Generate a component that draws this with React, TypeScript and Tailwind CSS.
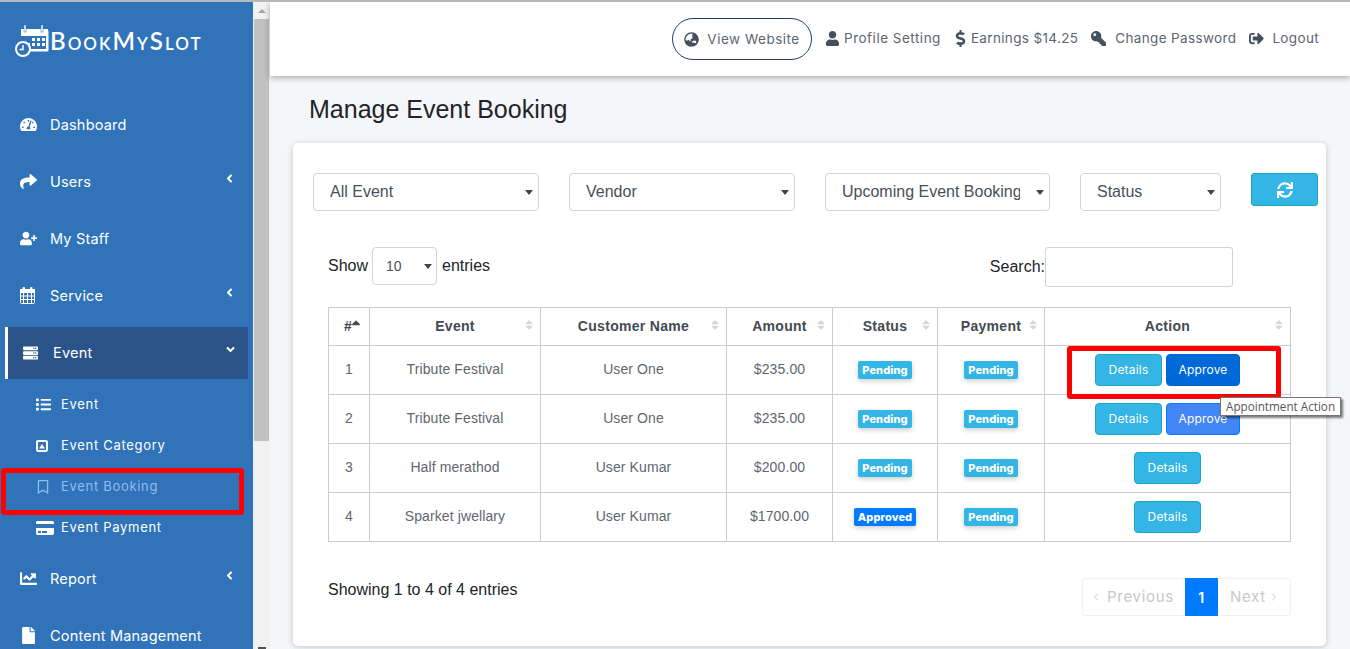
import type { ReactNode } from 'react';
import { ChevronLeft, ChevronRight } from 'lucide-react';
import {
  FaAngleDown,
  FaAngleLeft,
  FaChartLine,
  FaCreditCard,
  FaDollarSign,
  FaFile,
  FaGlobeAsia,
  FaKey,
  FaList,
  FaRegBookmark,
  FaServer,
  FaShare,
  FaSignOutAlt,
  FaSort,
  FaSortUp,
  FaSync,
  FaTachometerAlt,
  FaUser,
  FaUserPlus,
} from 'react-icons/fa';

const ui = "font-['Inter','Liberation_Sans',sans-serif]";
const arial = "font-['Liberation_Sans',Arial,sans-serif]";

function Logo() {
  return (
    <div className="flex items-center h-[94px] pl-[14px] pb-[17px]">
      <svg width="36" height="34" viewBox="0 0 36 34" fill="none" className="shrink-0">
        <path d="M7 6h26a1.500 1.500 0 0 1 1.500 1.500V26a1.500 1.500 0 0 1-1.500 1.500H15V25h17V12H7z" fill="#fff" />
        <rect x="7" y="5" width="27" height="6" fill="#fff" />
        <rect x="10" y="1" width="2" height="7" fill="#fff" stroke="#3073b9" strokeWidth="0.5" />
        <rect x="27" y="1" width="2" height="7" fill="#fff" stroke="#3073b9" strokeWidth="0.5" />
        <g fill="#fff">
          <rect x="18" y="14" width="3" height="3" />
          <rect x="23" y="14" width="3" height="3" />
          <rect x="28" y="14" width="3" height="3" />
          <rect x="13" y="19" width="3" height="3" />
          <rect x="18" y="19" width="3" height="3" />
          <rect x="23" y="19" width="3" height="3" />
          <rect x="28" y="19" width="3" height="3" />
        </g>
        <circle cx="9" cy="25" r="7" fill="#3073b9" stroke="#fff" strokeWidth="2" />
        <path d="M9 21v4.500H5.500" stroke="#fff" strokeWidth="1.500" />
      </svg>
      <span className="font-['Lato',sans-serif] font-semibold text-[24px] leading-none text-white [font-variant:small-caps] tracking-[2px] whitespace-nowrap">
        BookMySlot
      </span>
    </div>
  );
}

function CalendarIcon() {
  return (
    <svg width="15" height="17" viewBox="0 0 15 17" fill="none" className="block">
      <rect x="0.500" y="2.500" width="14" height="14" rx="1" stroke="#fff" />
      <rect x="0" y="2" width="15" height="4" fill="#fff" />
      <rect x="2.500" y="0" width="2.500" height="4.500" rx="1" fill="#fff" />
      <rect x="10" y="0" width="2.500" height="4.500" rx="1" fill="#fff" />
      <path d="M3.500 6v10M7.500 6v10M11.500 6v10M1 9h13M1 12.500h13" stroke="#fff" />
    </svg>
  );
}

function PictureIcon() {
  return (
    <svg width="12" height="12" viewBox="0 0 12 12" fill="none" className="block">
      <rect x="1" y="1" width="10" height="10" rx="1" stroke="#fff" strokeWidth="2" />
      <path d="M3 8.500 6 4l3 4.500z" fill="#fff" />
    </svg>
  );
}

function NavItem({ icon, label, arrow }: { icon: ReactNode; label: string; arrow?: boolean }) {
  return (
    <div className={`flex items-center h-[57px] pl-[20px] pr-[17px] text-white text-[14.500px] tracking-[0.2px] ${ui}`}>
      <span className="w-[30px] text-[17px]">{icon}</span>
      <span className="flex-1 whitespace-nowrap">{label}</span>
      {arrow && <FaAngleLeft className="text-[13px] mb-[6px]" />}
    </div>
  );
}

function SubItem({ icon, label, muted }: { icon: ReactNode; label: string; muted?: boolean }) {
  return (
    <div className={`flex items-center h-[41px] pl-[36px] text-[13px] tracking-[0.7px] ${ui} ${muted ? 'text-[#8fbdf0]' : 'text-white'}`}>
      <span className="w-[25px] text-[15px]">{icon}</span>
      <span>{label}</span>
    </div>
  );
}

function Sidebar() {
  return (
    <aside className="relative w-[253px] shrink-0 bg-[#3073b9] overflow-hidden">
      <Logo />
      <NavItem icon={<FaTachometerAlt />} label="Dashboard" />
      <NavItem icon={<FaShare />} label="Users" arrow />
      <NavItem icon={<FaUserPlus />} label="My Staff" />
      <NavItem icon={<CalendarIcon />} label="Service" arrow />
      <div className="h-[57px] py-[2.500px] pl-[5px] pr-[5px]">
        <div className={`flex items-center h-[52px] border-l-[3px] border-white bg-[#2a5389] pl-[15px] pr-[11px] text-white text-[14.500px] tracking-[0.2px] ${ui}`}>
          <FaServer className="text-[16px] w-[15px] mr-[15px]" />
          <span className="flex-1">Event</span>
          <FaAngleDown className="text-[13px] mb-[6px]" />
        </div>
      </div>
      <div className="h-[3px]" />
      <SubItem icon={<FaList />} label="Event" />
      <SubItem icon={<PictureIcon />} label="Event Category" />
      <SubItem icon={<FaRegBookmark className="text-[14px]" />} label="Event Booking" muted />
      <SubItem icon={<FaCreditCard className="text-[18px]" />} label="Event Payment" />
      <div className="h-[2px]" />
      <NavItem icon={<FaChartLine />} label="Report" arrow />
      <NavItem icon={<FaFile />} label="Content Management" />
    </aside>
  );
}

function Scrollbar() {
  return (
    <div className="w-[17px] shrink-0 flex flex-col items-center bg-[#f1f1f1]">
      <div className="h-[17px] flex items-center">
        <div className="w-0 h-0 border-x-[4px] border-x-transparent border-b-[4px] border-b-[#a3a3a3]" />
      </div>
      <div className="w-[15px] h-[422px] bg-[#c1c1c1]" />
      <div className="flex-1" />
      <div className="w-[8px] h-[2px] bg-[#505050]" />
    </div>
  );
}

function TopLink({ icon, label, iconWidth, className = '' }: { icon: ReactNode; label: string; iconWidth: string; className?: string }) {
  return (
    <span className={`flex items-center whitespace-nowrap mb-[2px] ${className}`}>
      <span className={`${iconWidth} text-[15px] text-[#454f5e]`}>{icon}</span>
      {label}
    </span>
  );
}

function Header() {
  return (
    <header className={`relative flex items-center justify-end h-[74px] shrink-0 bg-white pr-[31px] gap-[13px] text-[13.500px] tracking-[0.35px] text-[#5d6570] shadow-[0_2px_6px_rgba(0,0,0,0.3)] ${ui}`}>
      <span className="flex items-center justify-center gap-[8px] w-[140px] h-[42px] rounded-[21px] border border-[#23406e] whitespace-nowrap tracking-[0.5px]">
        <FaGlobeAsia className="text-[15px] text-[#454f5e]" />
        View Website
      </span>
      <TopLink iconWidth="w-[19px]" className="tracking-[0.5px]" icon={<FaUser />} label="Profile Setting" />
      <TopLink iconWidth="w-[17px]" icon={<FaDollarSign className="text-[17px] -ml-[2px]" />} label="Earnings $14.25" />
      <TopLink iconWidth="w-[24px]" icon={<FaKey className="-scale-x-100" />} label="Change Password" />
      <TopLink iconWidth="w-[23px]" icon={<FaSignOutAlt />} label="Logout" />
    </header>
  );
}

// flat select with the small native-looking triangle on the right
function Filter({ width, label }: { width: string; label: string }) {
  return (
    <div className={`relative ${width}`}>
      <select className={`block w-full h-[38px] pl-[16px] pr-[29px] appearance-none text-[16px] text-[#495057] bg-white border border-[#ced4da] rounded-[4px] ${arial}`}>
        <option>{label}</option>
      </select>
      <span className="absolute right-[6px] top-[17px] w-0 h-0 border-x-[4px] border-x-transparent border-t-[5px] border-t-[#444444]" />
    </div>
  );
}

function Badge({ label, approved }: { label: string; approved?: boolean }) {
  return (
    <span className={`inline-block h-[18px] px-[4px] rounded-[2px] text-[11px] leading-[18px] font-extrabold text-white shadow-[0_2px_5px_rgba(0,0,0,0.2)] ${ui} ${approved ? 'bg-[#007bff]' : 'bg-[#33b5e5]'}`}>
      {label}
    </span>
  );
}

function ActionBtn({ label, className }: { label: string; className: string }) {
  return (
    <span className={`inline-flex items-center justify-center h-[32px] rounded-[4px] border text-[12px] tracking-[0.2px] text-white ${ui} ${className}`}>
      {label}
    </span>
  );
}

const columns = ['#', 'Event', 'Customer Name', 'Amount', 'Status', 'Payment', 'Action'];
const widths = ['w-[41px]', 'w-[171px]', 'w-[186px]', 'w-[106px]', 'w-[105px]', 'w-[107px]', 'w-[246px]'];

const rows = [
  { id: 1, event: 'Tribute Festival', name: 'User One', amount: '$235.00', approved: false, approve: 'bg-[#0069d9] border-[#0062cc]' },
  { id: 2, event: 'Tribute Festival', name: 'User One', amount: '$235.00', approved: false, approve: 'bg-[#4285f4] border-[#007bff]' },
  { id: 3, event: 'Half merathod', name: 'User Kumar', amount: '$200.00', approved: false },
  { id: 4, event: 'Sparket jwellary', name: 'User Kumar', amount: '$1700.00', approved: true },
];

function BookingTable() {
  return (
    <table className={`w-[963px] table-fixed border-collapse text-[14px] tracking-[0.1px] text-[#5f6670] ${arial}`}>
      <colgroup>
        {widths.map(w => (
          <col key={w} className={w} />
        ))}
      </colgroup>
      <thead>
        <tr className="h-[38px]">
          {columns.map((c, i) => (
            <th key={c} className="relative border border-[#cccccc] text-center font-bold text-[#444a52] tracking-[0.3px]">
              <span className={i === 0 ? 'relative -left-[1px]' : ''}>{c}</span>
              {i === 0 ? (
                <FaSortUp className="absolute right-[6px] top-[11px] text-[14px] text-[#444a52]" />
              ) : (
                <FaSort className="absolute right-[5px] top-[11px] text-[12px] text-[#d6d6d6]" />
              )}
            </th>
          ))}
        </tr>
      </thead>
      <tbody>
        {rows.map(row => (
          <tr key={row.id} className="h-[49px] text-center">
            <td className="border border-[#cccccc] pb-[2px]">{row.id}</td>
            <td className="border border-[#cccccc] pb-[2px]">{row.event}</td>
            <td className="border border-[#cccccc] pb-[2px]">{row.name}</td>
            <td className="border border-[#cccccc] pb-[2px]">{row.amount}</td>
            <td className="border border-[#cccccc] pb-[2px]"><Badge label={row.approved ? 'Approved' : 'Pending'} approved={row.approved} /></td>
            <td className="border border-[#cccccc] pb-[2px]"><Badge label="Pending" /></td>
            <td className="border border-[#cccccc]">
              <div className="flex justify-center gap-[4px]">
                <ActionBtn label="Details" className="w-[67px] bg-[#33b5e5] border-[#1ea7c5]" />
                {row.approve && <ActionBtn label="Approve" className={`w-[74px] ${row.approve}`} />}
              </div>
            </td>
          </tr>
        ))}
      </tbody>
    </table>
  );
}

function Pagination() {
  return (
    <div className={`flex h-[38px] rounded-[3px] border border-[#f1f1f1] text-[15px] tracking-[0.7px] text-[#c8c8c8] ${ui}`}>
      <span className="flex items-center gap-[5px] w-[102px] pl-[7px]">
        <ChevronLeft size={12} strokeWidth={2} />
        Previous
      </span>
      <span className="flex items-center justify-center w-[33px] -my-px bg-[#007bff] text-white font-semibold text-[14px]">1</span>
      <span className="flex items-center gap-[2px] w-[72px] pl-[12px]">
        Next
        <ChevronRight size={12} strokeWidth={2} />
      </span>
    </div>
  );
}

function Card() {
  return (
    <section className={`mt-[17px] ml-[23px] mr-[24px] h-[503px] rounded-[5px] bg-white pt-[30px] pl-[20px] pr-[8px] shadow-[0_1px_6px_rgba(0,0,0,0.2)] ${arial}`}>
      <div className="flex items-start gap-[30px]">
        <Filter width="w-[226px]" label="All Event" />
        <Filter width="w-[226px]" label="Vendor" />
        <Filter width="w-[225px]" label="Upcoming Event Booking" />
        <Filter width="w-[141px]" label="Status" />
        <button className="flex items-center justify-center w-[67px] h-[33px] rounded-[3px] border border-[#1ea7c5] bg-[#33b5e5] text-white text-[16px]">
          <FaSync />
        </button>
      </div>
      <div className="flex items-center justify-between w-[905px] ml-[15px] mt-[36px] h-[40px] text-[16px] text-[#212529]">
        <div className="flex items-center gap-[4px] mb-[2px]">
          Show
          <div className="relative w-[65px]">
            <select className="block w-full h-[38px] pl-[13px] appearance-none text-[14px] text-[#495057] bg-white border border-[#ced4da] rounded-[4px]">
              <option>10</option>
            </select>
            <span className="absolute right-[5px] top-[17px] w-0 h-0 border-x-[4px] border-x-transparent border-t-[5px] border-t-[#444444]" />
          </div>
          <span className="ml-px">entries</span>
        </div>
        <div className="flex items-center">
          Search:
          <input className="w-[188px] h-[40px] bg-white border border-[#ced4da] rounded-[3px]" />
        </div>
      </div>
      <div className="ml-[15px] mt-[20px]">
        <BookingTable />
      </div>
      <div className="flex justify-between items-start w-[963px] ml-[15px] mt-[36px]">
        <span className="text-[16px] text-[#212529]">Showing 1 to 4 of 4 entries</span>
        <Pagination />
      </div>
    </section>
  );
}

export default function App() {
  return (
    <div className="relative w-[1350px] h-[649px] overflow-hidden bg-[#f4f6f9] border-t-2 border-[#b8b8b8]">
      <div className="flex h-[647px]">
        <Sidebar />
        <Scrollbar />
        <main className="flex-1 min-w-0 flex flex-col">
          <Header />
          <h1 className={`mt-[17px] ml-[39px] text-[25px] leading-[33px] text-[#212529] ${arial}`}>Manage Event Booking</h1>
          <Card />
        </main>
      </div>
      {/* annotation boxes and native tooltip sit on top of the screenshot */}
      <div className="absolute left-[1px] top-[466px] w-[243px] h-[47px] border-[5px] border-[#ff0000] rounded-[3px]" />
      <div className="absolute left-[1067px] top-[344px] w-[214px] h-[53px] border-[5px] border-[#ff0000] rounded-[3px]" />
      <div className={`absolute left-[1220px] top-[395px] h-[19px] px-[5px] bg-white border border-[#767676] text-[11.700px] leading-[17px] text-[#575757] whitespace-nowrap shadow-[2px_2px_2px_rgba(0,0,0,0.5)] font-['Open_Sans',sans-serif]`}>
        Appointment Action
      </div>
    </div>
  );
}
